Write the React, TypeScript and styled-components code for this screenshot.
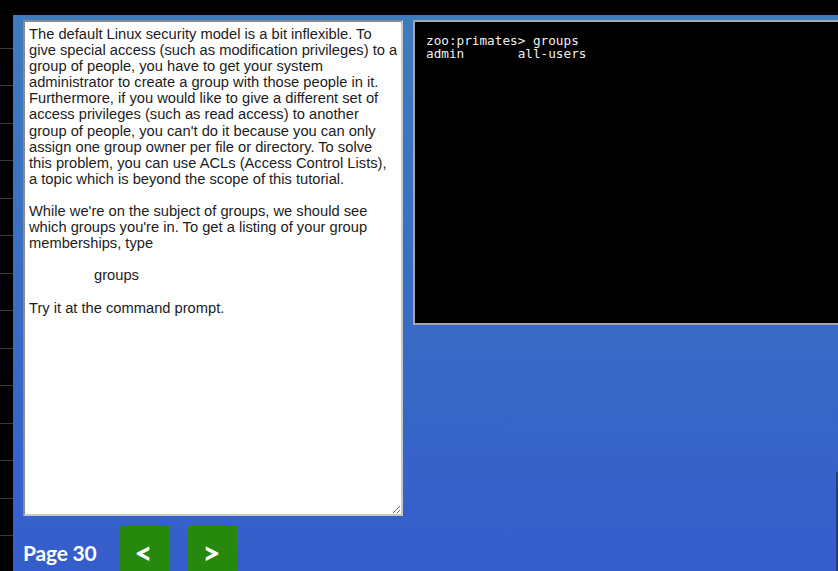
import React from "react";
import styled, { createGlobalStyle } from "styled-components";

const Global = createGlobalStyle`
  html, body { margin: 0; padding: 0; background: #000; overflow: hidden; }
  #root { width: 838px; height: 571px; }
`;

const Screen = styled.div`
  display: flex;
  width: 838px;
  height: 571px;
  background: #000;
  overflow: hidden;
`;

const SideStrip = styled.div`
  width: 13px;
  flex: none;
  display: flex;
  flex-direction: column;
  padding-top: 11px;
  box-sizing: border-box;
`;

const StripRow = styled.div`
  height: 37.5px;
  flex: none;
  box-sizing: border-box;
  border-bottom: 1px solid #3a3a3a;
`;

const Stage = styled.div`
  flex: 1;
  margin-top: 15px;
  background: linear-gradient(180deg, #3e7bbe 0%, #3a6ec4 45%, #355dcb 100%);
  display: grid;
  grid-template-columns: 380px 1fr;
  grid-template-rows: 496px 1fr;
  column-gap: 10px;
  row-gap: 10px;
  padding: 5px 0 0 10px;
  box-sizing: border-box;
  overflow: hidden;
  min-width: 0;
`;

const Lesson = styled.textarea`
  grid-column: 1;
  grid-row: 1;
  width: 380px;
  height: 496px;
  box-sizing: border-box;
  margin: 0;
  border: 2px solid;
  border-color: #8a8a8a #c8c8c8 #c8c8c8 #8a8a8a;
  padding: 4px 3px 4px 4px;
  background: #fff;
  color: #1c1c1c;
  font-family: "Liberation Sans", Arial, sans-serif;
  font-size: 14.7px;
  line-height: 16.1px;
  tab-size: 65px;
  outline: none;
  overflow: hidden;
`;

const RightColumn = styled.div`
  grid-column: 2;
  grid-row: 1 / span 2;
  display: flex;
  flex-direction: column;
  min-width: 0;
`;

const Terminal = styled.pre`
  margin: 0;
  width: calc(100% + 20px);
  height: 305px;
  flex: none;
  box-sizing: border-box;
  border: 2px solid #a6a6a6;
  background: #000;
  color: #f0f0f0;
  padding: 12px 11px;
  font-family: "DejaVu Sans Mono", "Liberation Mono", monospace;
  font-size: 12.7px;
  line-height: 13.3px;
  white-space: pre;
`;

const EdgeShadow = styled.div`
  align-self: flex-end;
  flex: 1;
  width: 2px;
  margin-top: 147px;
  background: #2a3b70;
`;

const Footer = styled.div`
  grid-column: 1;
  grid-row: 2;
  display: flex;
  align-items: flex-start;
`;

const PageLabel = styled.div`
  margin-top: 14px;
  margin-right: 22px;
  color: #fff;
  font-family: Lato, "Open Sans", sans-serif;
  font-weight: 700;
  font-size: 21px;
  line-height: 25px;
  letter-spacing: -0.2px;
`;

const NavButton = styled.button`
  width: 50px;
  height: 50px;
  flex: none;
  margin: 0 18px 0 0;
  padding: 0;
  border: none;
  background: #26890e;
  color: #fff;
  font-family: Lato, "Open Sans", sans-serif;
  font-weight: 900;
  font-size: 31px;
  line-height: 52px;
  text-align: center;
  cursor: pointer;
`;

const lessonText =
  "The default Linux security model is a bit inflexible. To give special access (such as modification privileges) to a group of people, you have to get your system administrator to create a group with those people in it. Furthermore, if you would like to give a different set of access privileges (such as read access) to another group of people, you can't do it because you can only assign one group owner per file or directory. To solve this problem, you can use ACLs (Access Control Lists), a topic which is beyond the scope of this tutorial.\n\nWhile we're on the subject of groups, we should see which groups you're in. To get a listing of your group memberships, type\n\n\tgroups\n\nTry it at the command prompt.";

const terminalText = "zoo:primates> groups\nadmin       all-users";

export default function App() {
  const rows = Array.from({ length: 15 });
  return (
    <>
      <Global />
      <Screen>
        <SideStrip>
          {rows.map((_, i) => (
            <StripRow key={i} />
          ))}
        </SideStrip>
        <Stage>
          <Lesson readOnly value={lessonText} />
          <RightColumn>
            <Terminal>{terminalText}</Terminal>
            <EdgeShadow />
          </RightColumn>
          <Footer>
            <PageLabel>Page 30</PageLabel>
            <NavButton>&lt;</NavButton>
            <NavButton>&gt;</NavButton>
          </Footer>
        </Stage>
      </Screen>
    </>
  );
}
